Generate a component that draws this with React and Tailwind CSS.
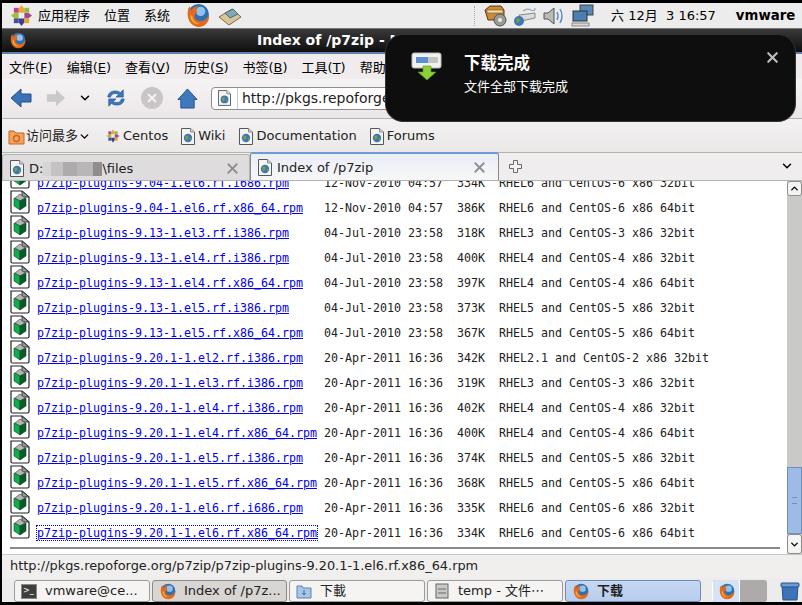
import { X, ChevronDown, ChevronUp } from 'lucide-react'

const UI_FONT = "font-['DejaVu_Sans','Noto_Sans_CJK_SC',sans-serif]"

const ROWS = [
  ['p7zip-plugins-9.04-1.el6.rf.i686.rpm', '12-Nov-2010 04:57', '334K', 'RHEL6 and CentOS-6 x86 32bit'],
  ['p7zip-plugins-9.04-1.el6.rf.x86_64.rpm', '12-Nov-2010 04:57', '386K', 'RHEL6 and CentOS-6 x86 64bit'],
  ['p7zip-plugins-9.13-1.el3.rf.i386.rpm', '04-Jul-2010 23:58', '318K', 'RHEL3 and CentOS-3 x86 32bit'],
  ['p7zip-plugins-9.13-1.el4.rf.i386.rpm', '04-Jul-2010 23:58', '400K', 'RHEL4 and CentOS-4 x86 32bit'],
  ['p7zip-plugins-9.13-1.el4.rf.x86_64.rpm', '04-Jul-2010 23:58', '397K', 'RHEL4 and CentOS-4 x86 64bit'],
  ['p7zip-plugins-9.13-1.el5.rf.i386.rpm', '04-Jul-2010 23:58', '373K', 'RHEL5 and CentOS-5 x86 32bit'],
  ['p7zip-plugins-9.13-1.el5.rf.x86_64.rpm', '04-Jul-2010 23:58', '367K', 'RHEL5 and CentOS-5 x86 64bit'],
  ['p7zip-plugins-9.20.1-1.el2.rf.i386.rpm', '20-Apr-2011 16:36', '342K', 'RHEL2.1 and CentOS-2 x86 32bit'],
  ['p7zip-plugins-9.20.1-1.el3.rf.i386.rpm', '20-Apr-2011 16:36', '319K', 'RHEL3 and CentOS-3 x86 32bit'],
  ['p7zip-plugins-9.20.1-1.el4.rf.i386.rpm', '20-Apr-2011 16:36', '402K', 'RHEL4 and CentOS-4 x86 32bit'],
  ['p7zip-plugins-9.20.1-1.el4.rf.x86_64.rpm', '20-Apr-2011 16:36', '400K', 'RHEL4 and CentOS-4 x86 64bit'],
  ['p7zip-plugins-9.20.1-1.el5.rf.i386.rpm', '20-Apr-2011 16:36', '374K', 'RHEL5 and CentOS-5 x86 32bit'],
  ['p7zip-plugins-9.20.1-1.el5.rf.x86_64.rpm', '20-Apr-2011 16:36', '368K', 'RHEL5 and CentOS-5 x86 64bit'],
  ['p7zip-plugins-9.20.1-1.el6.rf.i686.rpm', '20-Apr-2011 16:36', '335K', 'RHEL6 and CentOS-6 x86 32bit'],
  ['p7zip-plugins-9.20.1-1.el6.rf.x86_64.rpm', '20-Apr-2011 16:36', '334K', 'RHEL6 and CentOS-6 x86 64bit'],
]

function Firefox({ size = 16 }) {
  return (
    <svg width={size} height={size} viewBox="0 0 24 24" className="shrink-0">
      <circle cx="13" cy="11" r="10" fill="#2f6fb5" />
      <circle cx="15" cy="8" r="4.5" fill="#8fc3ea" />
      <path d="M3 6 C1 14 5 23 13 23 C20 23 24 17 23 11 C21 17 15 19 11 16 C8 14 9 10 12 9 C10 7 11 5 13 3 C9 3 7 5 6 7 C5 6 5 5 5 3 C4 4 3 5 3 6 Z" fill="#e2691d" />
      <path d="M5 12 C5 18 10 21 15 20 C11 20 7 17 7 12 Z" fill="#f8b133" />
    </svg>
  )
}

function PageGlobe({ size = 14 }) {
  return (
    <svg width={size} height={size + 3} viewBox="0 0 14 17" className="shrink-0">
      <path d="M0.5 0.5 H9.5 L13.5 4 V16.5 H0.5 Z" fill="#f4f4f4" stroke="#55585a" />
      <path d="M9.5 0.5 V4 H13.5" fill="#d8d8d8" stroke="#8a8a8a" />
      <circle cx="7" cy="10" r="4.2" fill="#3f77b4" />
      <path d="M4.3 8 Q7 6.8 7.5 9 Q7 11.5 5.5 12.2 Q3.8 10.5 4.3 8 Z M9 9.5 L10.7 10.5 L9 13 Z" fill="#7f9f3a" />
    </svg>
  )
}

function RpmIcon() {
  return (
    <svg width="20" height="24" viewBox="0 0 20 24" className="shrink-0">
      <path d="M1 1 H12 L19 7 V21.5 Q19 23 17.5 23 H2.5 Q1 23 1 21.5 Z" fill="#fff" stroke="#222" strokeWidth="1.2" />
      <path d="M12 1 V7 H19 Z" fill="#9b9b9b" stroke="#333" />
      <path d="M5 8 L10 4 L15 8 L10 11 Z" fill="#b5b5b5" stroke="#333" strokeWidth="0.6" />
      <path d="M4 8 L10 11 V20 L4 16 Z" fill="#0fae4c" stroke="#0a4a22" strokeWidth="0.6" />
      <path d="M16 8 L10 11 V20 L16 16 Z" fill="#0a5a2a" stroke="#0a4a22" strokeWidth="0.6" />
    </svg>
  )
}

function CentosLogo({ size = 20 }) {
  return (
    <svg width={size} height={size} viewBox="0 0 24 24" className="shrink-0">
      <path d="M12 1 L15 5 V9 H9 V5 Z" fill="#e8a93a" />
      <path d="M23 12 L19 15 H15 V9 H19 Z" fill="#a1488f" />
      <path d="M12 23 L9 19 V15 H15 V19 Z" fill="#3c3d8e" />
      <path d="M1 12 L5 9 H9 V15 H5 Z" fill="#9cc13c" />
      <rect x="4" y="4" width="5" height="5" fill="#c23f8c" />
      <rect x="15" y="4" width="5" height="5" fill="#92b93a" />
      <rect x="15" y="15" width="5" height="5" fill="#e5a531" />
      <rect x="4" y="15" width="5" height="5" fill="#4b4d9d" />
    </svg>
  )
}

function TopPanel() {
  return (
    <div className={`h-[25px] bg-[#ececec] flex items-center text-[13px] text-black ${UI_FONT}`}>
      <div className="ml-[8px] w-[23px]"><CentosLogo size={23} /></div>
      <span className="ml-[5px]">应用程序</span>
      <span className="ml-[14px]">位置</span>
      <span className="ml-[14px]">系统</span>
      <div className="ml-[15px]"><Firefox size={25} /></div>
      <svg width="24" height="22" viewBox="0 0 24 22" className="ml-[8px]">
        <path d="M1 12 L14 4 L23 12 L11 20 Z" fill="#d8c59a" stroke="#7a6b4a" />
        <path d="M7 8 L15 4 L20 9 L12 13 Z" fill="#7fa8b8" stroke="#4d6a75" />
      </svg>
      <div className="ml-[232px] w-[3px] h-[20px] border-l border-dotted border-[#aaa]" />
      <svg width="24" height="22" viewBox="0 0 24 22" className="ml-[7px]">
        <path d="M1 5 L6 1 H17 L20 5 V15 H4 Z" fill="#c98a3a" stroke="#5c3a12" />
        <path d="M3 5 H19 V8 H3 Z" fill="#f4d9a6" stroke="#7a5220" strokeWidth="0.6" />
        <circle cx="16" cy="15" r="6" fill="#9a9a92" stroke="#555" />
        <circle cx="16" cy="15" r="2" fill="#eee" />
      </svg>
      <svg width="24" height="22" viewBox="0 0 24 22" className="ml-[5px]">
        <path d="M6 10 L22 8 V13 L8 16 Z" fill="#d9dcd8" stroke="#888" />
        <path d="M10 6 Q14 3 18 5 T22 3" fill="none" stroke="#8fa8c4" strokeWidth="1.3" />
        <circle cx="6" cy="16" r="5" fill="#3f77b4" />
        <path d="M3 14 Q6 12 7 15 Q6 18 4 18 Z" fill="#7f9f3a" />
      </svg>
      <svg width="24" height="22" viewBox="0 0 24 22" className="ml-[5px]">
        <path d="M2 8 H6 L12 3 V19 L6 14 H2 Z" fill="#b9bbb6" stroke="#555" />
        <path d="M15 7 Q17 11 15 15 M18 4 Q22 11 18 18" fill="none" stroke="#5a86c0" strokeWidth="1.4" />
      </svg>
      <svg width="24" height="23" viewBox="0 0 24 23" className="ml-[5px]">
        <rect x="9" y="1" width="13" height="10" fill="#5b86b8" stroke="#444" />
        <rect x="2" y="7" width="14" height="10" fill="#4d7db5" stroke="#333" />
        <rect x="1" y="19" width="17" height="3" fill="#d9d9d6" stroke="#888" />
      </svg>
      <span className="ml-[16px] whitespace-pre">六 12月  3 16:57</span>
      <span className="ml-[20px] font-bold text-[13.3px]">vmware</span>
    </div>
  )
}

function TitleBar() {
  return (
    <div className={`relative h-[26px] flex items-center border-t border-[#777] border-b-2 border-b-[#5f7fa8] bg-gradient-to-b from-[#3a3a3a] to-[#0f0f0f] ${UI_FONT}`}>
      <div className="ml-[7px]"><Firefox size={17} /></div>
      <span className="ml-[231px] pt-[1px] text-[14px] font-bold text-white whitespace-pre">Index of /p7zip - Mozilla Firefox</span>
    </div>
  )
}

function MenuBar() {
  const items = [['文件(', 'F'], ['编辑(', 'E'], ['查看(', 'V'], ['历史(', 'S'], ['书签(', 'B'], ['工具(', 'T']]
  return (
    <div className={`h-[25px] bg-[#f0ecee] flex items-center pl-[7px] pt-[2px] gap-[14px] text-[13px] text-black ${UI_FONT}`}>
      {items.map(([label, key]) => (
        <span key={key} className="whitespace-pre">{label}<u>{key}</u>)</span>
      ))}
      <span>帮助</span>
    </div>
  )
}

function NavBar() {
  return (
    <div className={`h-[40px] bg-gradient-to-b from-[#f6f3f4] to-[#ebe7e8] border-b border-[#b5b3b0] flex items-center ${UI_FONT}`}>
      <svg width="22" height="22" viewBox="0 0 22 22" className="ml-[8px]">
        <path d="M1 11 L11 2 V7 H21 V15 H11 V20 Z" fill="#3a72b8" stroke="#24508a" />
      </svg>
      <svg width="20" height="22" viewBox="0 0 22 22" className="ml-[14px]">
        <path d="M21 11 L11 2 V7 H1 V15 H11 V20 Z" fill="#c9c9c7" />
      </svg>
      <ChevronDown size={14} strokeWidth={2.5} className="ml-[12px] text-black" />
      <svg width="20" height="22" viewBox="0 0 22 22" className="ml-[14px]">
        <path d="M2 10 C2 4 10 1 16 5 L19 2 V10 H11 L14 7 C10 5 6 6 5 10 Z" fill="#3a78c0" stroke="#24508a" strokeWidth="0.7" />
        <path d="M20 12 C20 18 12 21 6 17 L3 20 V12 H11 L8 15 C12 17 16 16 17 12 Z" fill="#3a78c0" stroke="#24508a" strokeWidth="0.7" />
      </svg>
      <div className="ml-[15px] w-[22px] h-[22px] rounded-full bg-[#c9c5c6] flex items-center justify-center">
        <X size={14} strokeWidth={3.5} className="text-[#f2f0f0]" />
      </div>
      <svg width="21" height="21" viewBox="0 0 22 22" className="ml-[14px]">
        <path d="M1 12 L11 1 L21 12 H18 V21 H4 V12 Z" fill="#3f78bc" stroke="#24508a" />
      </svg>
      <div className="ml-[13px] w-[300px] h-[23px] bg-white border border-[#8f8d8a] rounded-l-[4px] flex items-center text-[14px] text-[#222]">
        <div className="w-[26px] h-full border-r border-[#ccc] flex items-center justify-center"><PageGlobe size={13} /></div>
        <span className="ml-[4px] whitespace-pre">http://pkgs.repoforge.org/p7zip/</span>
      </div>
    </div>
  )
}

function BookmarksBar() {
  return (
    <div className={`h-[34px] pt-[2px] bg-gradient-to-b from-[#f4f1f2] to-[#ebe8e8] border-b border-[#b5b3b0] flex items-center pl-[6px] text-[13px] text-[#222] ${UI_FONT}`}>
      <svg width="17" height="17" viewBox="0 0 17 17">
        <path d="M1 3 H6 L8 5 H16 V16 H1 Z" fill="#f1a35f" stroke="#c8641f" />
        <circle cx="8.5" cy="10.5" r="3" fill="none" stroke="#c8641f" strokeWidth="1.3" />
      </svg>
      <span className="ml-[1px]">访问最多</span>
      <ChevronDown size={13} strokeWidth={2.5} className="text-black" />
      <div className="ml-[15px]"><CentosLogo size={14} /></div>
      <span className="ml-[3px]">Centos</span>
      <div className="ml-[13px]"><PageGlobe /></div>
      <span className="ml-[3px]">Wiki</span>
      <div className="ml-[14px]"><PageGlobe /></div>
      <span className="ml-[3px]">Documentation</span>
      <div className="ml-[13px]"><PageGlobe /></div>
      <span className="ml-[3px]">Forums</span>
    </div>
  )
}

function TabBar() {
  return (
    <div className={`h-[28px] bg-[#efedee] border-b border-[#b5b3b0] flex items-end text-[13px] text-[#222] ${UI_FONT}`}>
      <div className="w-[248px] h-[26px] pt-[3px] bg-[#dedcdc] border border-b-0 border-[#b5b3b0] rounded-t-[3px] flex items-center">
        <div className="ml-[7px]"><PageGlobe /></div>
        <span className="ml-[5px]">D:</span>
        <div className="flex h-[14px]">
          <div className="w-[8px] bg-[#d6d4d4]" />
          <div className="w-[12px] bg-[#c4c2c2]" />
          <div className="w-[14px] bg-[#adabab]" />
          <div className="w-[16px] bg-[#b8b6b6]" />
          <div className="w-[9px] bg-[#8f8d8d]" />
        </div>
        <span>\files</span>
        <X size={17} strokeWidth={2.5} className="ml-auto mr-[8px] text-[#8e8f8c]" />
      </div>
      <div className="w-[249px] h-[28px] pt-[2px] bg-gradient-to-b from-[#e9eef6] to-[#f7f7f8] border border-b-0 border-t-2 border-[#8a8987] border-t-[#6f9ad6] rounded-t-[3px] flex items-center">
        <div className="ml-[7px]"><PageGlobe /></div>
        <span className="ml-[5px]">Index of /p7zip</span>
        <X size={17} strokeWidth={2.5} className="ml-auto mr-[10px] text-[#8e8f8c]" />
      </div>
      <svg width="13" height="13" viewBox="0 0 13 13" className="ml-[10px] mb-[7px]">
        <path d="M4.5 0.5 H8.5 V4.5 H12.5 V8.5 H8.5 V12.5 H4.5 V8.5 H0.5 V4.5 H4.5 Z" fill="#f4f3f3" stroke="#6a6a68" />
      </svg>
      <ChevronDown size={14} strokeWidth={2.5} className="ml-auto mr-[8px] mb-[7px] text-black" />
    </div>
  )
}

function Row({ name, date, size, desc, focused }) {
  return (
    <div className="h-[25px] flex shrink-0">
      <div className="w-[27px] pl-[8px] -mt-[2px]"><RpmIcon /></div>
      <div className="w-[8px]" />
      <div className="mt-[9px] h-[16px] leading-[15px] whitespace-pre">
        <a href="#" className={`text-[#0000ee] underline ${focused ? 'outline-1 outline-dotted outline-[#0000ee]' : ''}`}>{name}</a>
        {' '.repeat(41 - name.length)}{date}  {size}  {desc}
      </div>
    </div>
  )
}

function Listing() {
  return (
    <div className="h-[375px] flex bg-white">
      <div className="flex-1 min-w-0 overflow-hidden text-[11.63px] font-['DejaVu_Sans_Mono',monospace] text-[#222]">
        <div className="-mt-[14px]">
          {ROWS.map((r, i) => (
            <Row key={r[0]} name={r[0]} date={r[1]} size={r[2]} desc={r[3]} focused={i === ROWS.length - 1} />
          ))}
        </div>
        <div className="mt-[5px] ml-[8px] mr-[7px] h-[2px] bg-[#8a8a8a]" />
      </div>
      <div className="w-[15px] flex flex-col bg-[#c9c9c8]">
        <div className="h-[15px] bg-[#f4f4f4] border border-[#8f8d8a] rounded-[3px] flex items-center justify-center">
          <ChevronUp size={11} strokeWidth={3} className="text-black" />
        </div>
        <div className="flex-1" />
        <div className="h-[67px] bg-[#9dbbe6] border border-[#6f8fb8] flex items-center justify-center">
          <div className="w-[5px] h-[7px] border-y border-[#6f8fb8]" />
        </div>
        <div className="h-[20px] bg-[#f4f4f4] border border-[#8f8d8a] rounded-[3px] flex items-center justify-center">
          <ChevronDown size={11} strokeWidth={3} className="text-black" />
        </div>
      </div>
    </div>
  )
}

function StatusBar() {
  return (
    <div className={`h-[24px] pb-[2px] bg-[#f0efee] border-t border-[#c9c7c4] flex items-center pl-[8px] text-[12.9px] text-[#222] ${UI_FONT}`}>
      http://pkgs.repoforge.org/p7zip/p7zip-plugins-9.20.1-1.el6.rf.x86_64.rpm
    </div>
  )
}

function TaskButton({ icon, label, width, state }) {
  const look = {
    idle: 'bg-[#f5f4f3] border-[#9d9b98]',
    pressed: 'bg-[#d8d5d2] border-[#8d8b88]',
    active: 'bg-gradient-to-b from-[#c6d8f2] to-[#b7cdec] border-[#6f8cb3] font-bold',
  }[state]
  return (
    <div className={`h-[22px] shrink-0 border rounded-[3px] flex items-center pl-[6px] gap-[8px] whitespace-pre ${look}`} style={{ width }}>
      {icon}
      <span>{label}</span>
    </div>
  )
}

function Taskbar() {
  return (
    <div className={`h-[24px] bg-[#ececec] flex items-end pl-[12px] gap-[2px] text-[13px] text-[#222] ${UI_FONT}`}>
      <TaskButton
        width={136}
        state="idle"
        label="vmware@ce..."
        icon={<div className="w-[16px] h-[15px] bg-[#3c3f3c] border border-[#888] text-[8px] leading-[12px] text-white pl-[1px]">&gt;_</div>}
      />
      <TaskButton width={135} state="pressed" label="Index of /p7z..." icon={<Firefox size={17} />} />
      <TaskButton
        width={136}
        state="idle"
        label="下載"
        icon={
          <svg width="16" height="16" viewBox="0 0 16 16">
            <path d="M1 3 H6 L7 5 H15 V15 H1 Z" fill="#a9c6e6" stroke="#5d83ad" />
            <path d="M8 7 V12 M6 10 L8 12 L10 10" stroke="#3f6c9c" fill="none" />
          </svg>
        }
      />
      <TaskButton
        width={136}
        state="idle"
        label="temp - 文件⋯"
        icon={
          <svg width="16" height="16" viewBox="0 0 16 16">
            <rect x="2" y="1" width="12" height="14" fill="#c9c9c5" stroke="#666" />
            <path d="M4 6 H12 M4 10 H12" stroke="#666" />
          </svg>
        }
      />
      <TaskButton width={136} state="active" label="下载" icon={<Firefox size={17} />} />
      <div className="ml-[9px] w-[55px] h-[22px] bg-[#aeaaa9] rounded-[3px] flex overflow-hidden">
        <div className="w-[28px] bg-[#d5e3f7] border-x border-white flex items-center justify-center"><Firefox size={17} /></div>
      </div>
      <svg width="20" height="20" viewBox="0 0 20 20" className="ml-[11px] mb-[1px]">
        <path d="M2 4 H18 L17 19 H3 Z" fill="#3d73b8" stroke="#24508a" />
        <rect x="1" y="2" width="18" height="4" rx="1" fill="#6d9ad2" stroke="#24508a" />
      </svg>
    </div>
  )
}

function DownloadNotice() {
  return (
    <div className={`absolute left-[385px] top-[34px] w-[411px] h-[88px] bg-[#0e0e0e] border border-[#333] rounded-[18px] text-white ${UI_FONT}`}>
      <svg width="32" height="30" viewBox="0 0 32 30" className="absolute left-[25px] top-[17px]">
        <rect x="1" y="1" width="29" height="15" rx="2" fill="#f1f1ee" stroke="#bbb" />
        <rect x="5" y="5" width="22" height="6" rx="1" fill="#c4c4c0" />
        <rect x="5" y="5" width="12" height="6" fill="#5a8fd0" />
        <path d="M12 14 H20 V20 H25 L16 28 L7 20 H12 Z" fill="#8ccf3a" stroke="#5f9a20" strokeWidth="0.6" />
      </svg>
      <span className="absolute left-[78px] top-[17px] text-[16.5px] font-bold leading-[24px]">下载完成</span>
      <span className="absolute left-[78px] top-[43px] text-[13px] leading-[18px]">文件全部下载完成</span>
      <X size={17} strokeWidth={3} className="absolute right-[14px] top-[14px] text-[#bdbdbd]" />
    </div>
  )
}

export default function App() {
  return (
    <div className="relative w-[802px] h-[605px] overflow-hidden bg-black pt-[3px] pb-[3px] pl-[2px] flex flex-col">
      <TopPanel />
      <TitleBar />
      <MenuBar />
      <NavBar />
      <BookmarksBar />
      <TabBar />
      <Listing />
      <StatusBar />
      <Taskbar />
      <DownloadNotice />
    </div>
  )
}
